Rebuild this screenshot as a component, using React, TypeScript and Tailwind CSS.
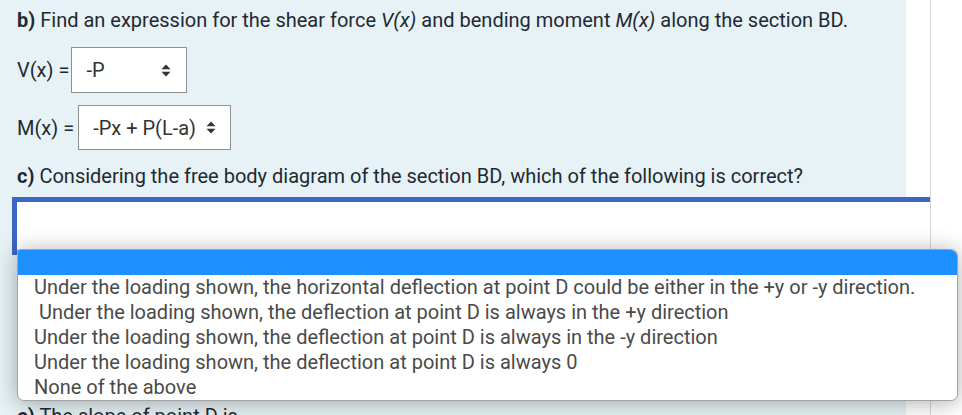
import React from 'react';

const options = [
  'Under the loading shown, the horizontal deflection at point D could be either in the +y or -y direction.',
  ' Under the loading shown, the deflection at point D is always in the +y direction',
  'Under the loading shown, the deflection at point D is always in the -y direction',
  'Under the loading shown, the deflection at point D is always 0',
  'None of the above',
];

function SortArrows() {
  return (
    <svg width="10" height="13" viewBox="0 0 10 13" className="shrink-0">
      <path d="M0.5 5.2 L5 0.6 L9.5 5.2 Z" fill="#333" />
      <path d="M0.5 7.8 L5 12.4 L9.5 7.8 Z" fill="#333" />
    </svg>
  );
}

export default function App() {
  return (
    <div
      className="relative w-[962px] h-[415px] overflow-hidden bg-white text-[#1f2933]"
      style={{ fontFamily: 'Roboto, "Liberation Sans", sans-serif' }}
    >
      <div className="flex h-full">
        {/* question column */}
        <div className="w-[931px] h-full border-r border-[#d4d4d4] overflow-hidden">
          <div className="w-[906px] h-full bg-[#e6f2f5] pl-[17px] pt-[7px]">
            <p className="text-[20px] leading-[27px] whitespace-nowrap">
              <b>b)</b> Find an expression for the shear force <i>V(x)</i> and bending moment <i>M(x)</i> along the section BD.
            </p>

            <div className="flex items-center mt-[13px] text-[20px]">
              <span>V(x) =</span>
              <div className="ml-[2px] w-[116px] h-[46px] bg-white border border-[#8c9196] flex items-center justify-between pl-[14px] pr-[15px] text-[#333]">
                <span>-P</span>
                <SortArrows />
              </div>
            </div>

            <div className="flex items-center mt-[12px] text-[20px]">
              <span>M(x) =</span>
              <div className="ml-[4px] w-[153px] h-[45px] bg-white border border-[#8c9196] flex items-center justify-between pl-[14px] pr-[14px] text-[#333]">
                <span>-Px + P(L-a)</span>
                <SortArrows />
              </div>
            </div>

            <p className="mt-[13px] text-[20px] leading-[27px] whitespace-nowrap">
              <b>c)</b> Considering the free body diagram of the section BD, which of the following is correct?
            </p>

            <div className="-ml-[5px] mt-[7px] w-[925px] h-[58px] bg-white border-[5px] border-[#3d66c4]" />

            <p className="mt-[148px] text-[20px] leading-[27px] whitespace-nowrap">
              <b>e)</b> The slope of point D is
            </p>
          </div>
        </div>
      </div>

      {/* open select list */}
      <div className="absolute left-[17px] top-[249px] w-[941px] h-[152px] bg-white border border-[#a3a3a3] rounded-[7px] rounded-tl-[3px] overflow-hidden shadow-[0_2px_22px_rgba(0,0,0,0.32)]">
        <div className="h-[25px] bg-[#1e8fff]" />
        {options.map((o) => (
          <div key={o} className="pl-[16px] text-[20px] leading-[25px] text-[#4a4a4a] whitespace-pre">
            {o}
          </div>
        ))}
      </div>
    </div>
  );
}
